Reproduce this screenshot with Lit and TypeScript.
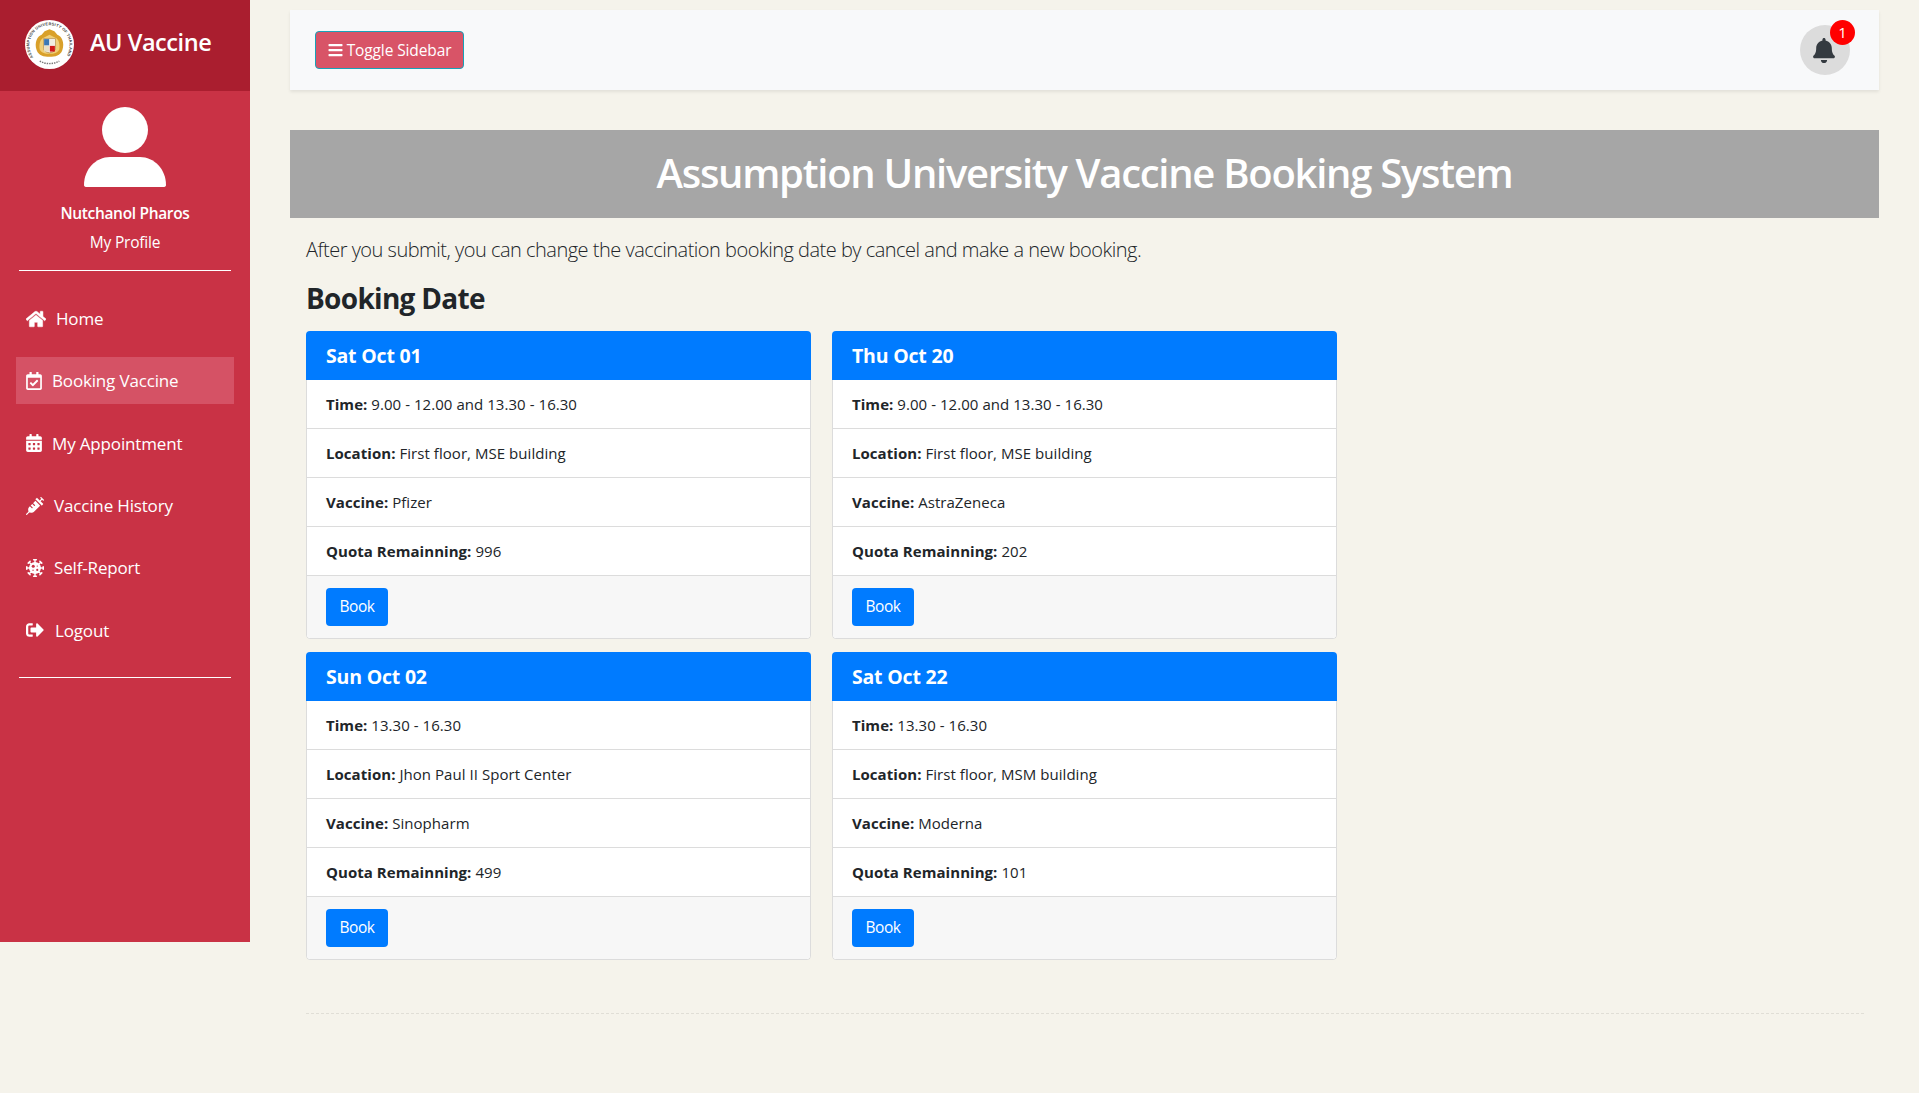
import { LitElement, html, css, svg } from "lit";
import { customElement } from "lit/decorators.js";

const ic = (vb: string, d: string, cls = "ic") =>
  html`<svg class=${cls} viewBox=${vb} fill="currentColor" aria-hidden="true"><path d=${d}></path></svg>`;

const HOME = "M280.37 148.26L96 300.11V464a16 16 0 0 0 16 16l112.06-.29a16 16 0 0 0 15.92-16V368a16 16 0 0 1 16-16h64a16 16 0 0 1 16 16v95.64a16 16 0 0 0 16 16.05L464 480a16 16 0 0 0 16-16V300L295.67 148.26a12.19 12.19 0 0 0-15.3 0zM571.6 251.47L488 182.56V44.05a12 12 0 0 0-12-12h-56a12 12 0 0 0-12 12v72.61L318.47 43a48 48 0 0 0-61 0L4.34 251.47a12 12 0 0 0-1.6 16.9l25.5 31A12 12 0 0 0 45.15 301l235.22-193.74a12.19 12.19 0 0 1 15.3 0L530.9 301a12 12 0 0 0 16.9-1.6l25.5-31a12 12 0 0 0-1.7-16.93z";
const CALCHECK = "M400 64h-48V12c0-6.627-5.373-12-12-12h-40c-6.627 0-12 5.373-12 12v52H160V12c0-6.627-5.373-12-12-12h-40c-6.627 0-12 5.373-12 12v52H48C21.49 64 0 85.49 0 112v352c0 26.51 21.49 48 48 48h352c26.51 0 48-21.49 48-48V112c0-26.51-21.49-48-48-48zm-6 400H54a6 6 0 0 1-6-6V160h352v298a6 6 0 0 1-6 6zm-52.849-200.65L198.842 404.519c-4.705 4.667-12.303 4.637-16.971-.068l-75.091-75.699c-4.667-4.705-4.637-12.303.068-16.971l22.719-22.536c4.705-4.667 12.303-4.637 16.97.069l44.104 44.461 111.072-110.181c4.705-4.667 12.303-4.637 16.971.068l22.536 22.718c4.667 4.705 4.636 12.303-.069 16.97z";
const CALALT = "M0 464c0 26.5 21.5 48 48 48h352c26.5 0 48-21.5 48-48V192H0v272zm320-196c0-6.6 5.4-12 12-12h40c6.6 0 12 5.4 12 12v40c0 6.6-5.4 12-12 12h-40c-6.6 0-12-5.4-12-12v-40zm0 128c0-6.6 5.4-12 12-12h40c6.6 0 12 5.4 12 12v40c0 6.6-5.4 12-12 12h-40c-6.6 0-12-5.4-12-12v-40zM192 268c0-6.6 5.4-12 12-12h40c6.6 0 12 5.4 12 12v40c0 6.6-5.4 12-12 12h-40c-6.6 0-12-5.4-12-12v-40zm0 128c0-6.6 5.4-12 12-12h40c6.6 0 12 5.4 12 12v40c0 6.6-5.4 12-12 12h-40c-6.6 0-12-5.4-12-12v-40zM64 268c0-6.6 5.4-12 12-12h40c6.6 0 12 5.4 12 12v40c0 6.6-5.4 12-12 12H76c-6.6 0-12-5.4-12-12v-40zm0 128c0-6.6 5.4-12 12-12h40c6.6 0 12 5.4 12 12v40c0 6.6-5.4 12-12 12H76c-6.6 0-12-5.4-12-12v-40zM400 64h-48V16c0-8.8-7.2-16-16-16h-32c-8.8 0-16 7.2-16 16v48H160V16c0-8.8-7.2-16-16-16h-32c-8.8 0-16 7.2-16 16v48H48C21.5 64 0 85.5 0 112v48h448v-48c0-26.5-21.5-48-48-48z";
const SYRINGE = "M201.5 174.8l55.7 55.8c3.1 3.1 3.1 8.2 0 11.3l-11.3 11.3c-3.1 3.1-8.2 3.1-11.3 0l-55.7-55.8-45.3 45.3 55.8 55.8c3.1 3.1 3.1 8.2 0 11.3l-11.3 11.3c-3.1 3.1-8.2 3.1-11.3 0L111 265.2l-26.4 26.4c-17.3 17.3-25.6 41.1-23 65.4l7.1 63.6L2.3 487c-3.1 3.1-3.1 8.2 0 11.3l11.3 11.3c3.1 3.1 8.2 3.1 11.3 0l66.3-66.3 63.6 7.1c23.9 2.6 47.9-5.4 65.4-23l181.9-181.9-135.7-135.7-64.9 65zm308.2-93.3L430.5 2.3c-3.1-3.1-8.2-3.1-11.3 0l-11.3 11.3c-3.1 3.1-3.1 8.2 0 11.3l28.3 28.3-45.3 45.3-56.6-56.6-17-17c-3.1-3.1-8.2-3.1-11.3 0l-33.9 33.9c-3.1 3.1-3.1 8.2 0 11.3l17 17L424.8 223l17 17c3.1 3.1 8.2 3.1 11.3 0l33.9-34c3.1-3.1 3.1-8.2 0-11.3l-73.5-73.5 45.3-45.3 28.3 28.3c3.1 3.1 8.2 3.1 11.3 0l11.3-11.3c3.1-3.2 3.1-8.2 0-11.4z";
const SIGNOUT = "M497 273L329 441c-15 15-41 4.5-41-17v-96H152c-13.3 0-24-10.7-24-24v-96c0-13.3 10.7-24 24-24h136V88c0-21.4 25.9-32 41-17l168 168c9.3 9.4 9.3 24.6 0 34zM192 436v-40c0-6.6-5.4-12-12-12H96c-17.7 0-32-14.3-32-32V160c0-17.7 14.3-32 32-32h84c6.6 0 12-5.4 12-12V76c0-6.6-5.4-12-12-12H96c-53 0-96 43-96 96v192c0 53 43 96 96 96h84c6.6 0 12-5.4 12-12z";
const BARS = "M16 132h416c8.837 0 16-7.163 16-16V76c0-8.837-7.163-16-16-16H16C7.163 60 0 67.163 0 76v40c0 8.837 7.163 16 16 16zm0 160h416c8.837 0 16-7.163 16-16v-40c0-8.837-7.163-16-16-16H16c-8.837 0-16 7.163-16 16v40c0 8.837 7.163 16 16 16zm0 160h416c8.837 0 16-7.163 16-16v-40c0-8.837-7.163-16-16-16H16c-8.837 0-16 7.163-16 16v40c0 8.837 7.163 16 16 16z";
const BELL = "M224 512c35.32 0 63.97-28.65 63.97-64H160.03c0 35.35 28.65 64 63.97 64zm215.39-149.71c-19.32-20.76-55.47-51.99-55.47-154.29 0-77.7-54.48-139.9-127.94-155.16V32c0-17.67-14.32-32-31.98-32s-31.98 14.33-31.98 32v20.84C118.56 68.1 64.08 130.3 64.08 208c0 102.3-36.15 133.53-55.47 154.29-6 6.45-8.66 14.16-8.61 21.71.11 16.4 12.98 32 32.1 32h383.8c19.12 0 32-15.6 32.1-32 .05-7.55-2.61-15.27-8.61-21.71z";

const virus = html`<svg class="ic w18" viewBox="0 0 512 512" aria-hidden="true">
  ${[0, 45, 90, 135, 180, 225, 270, 315].map(
    (a) => svg`<g transform="rotate(${a} 256 256)" fill="currentColor"><rect x="236" y="20" width="40" height="110"></rect><rect x="196" y="0" width="120" height="44" rx="22"></rect></g>`
  )}
  <circle cx="256" cy="256" r="170" fill="currentColor"></circle>
  <circle cx="206" cy="206" r="44" fill="#c93245"></circle>
  <circle cx="320" cy="310" r="30" fill="#c93245"></circle>
  <circle cx="320" cy="200" r="18" fill="#c93245"></circle>
  <circle cx="200" cy="320" r="18" fill="#c93245"></circle>
</svg>`;

const logo = html`<svg class="logo" viewBox="0 0 100 100" aria-hidden="true">
  <circle cx="50" cy="50" r="50" fill="#fff"></circle>
  <defs><path id="ring" d="M17 76 A41 41 0 1 1 83 76"></path></defs>
  <text font-size="8" font-family="'Liberation Sans',sans-serif" font-weight="700" fill="#444" textLength="176"><textPath href="#ring">ASSUMPTION UNIVERSITY OF THAILAND</textPath></text>
  <path d="M30 84 Q50 94 70 84" fill="none" stroke="#777" stroke-width="3" stroke-dasharray="3 2"></path>
  <path d="M24 62 C18 46 26 32 34 30 L40 23 L50 19 L60 23 L66 30 C74 32 82 46 76 62 C72 72 62 75 50 75 C38 75 28 72 24 62z" fill="#d9a02a"></path>
  <path d="M30 60 C28 48 32 38 38 36 L50 30 L62 36 C68 38 72 48 70 60 C66 67 58 69 50 69 C42 69 34 67 30 60z" fill="#f0cf78"></path>
  <path d="M38 38 H62 V58 Q62 65 50 67 Q38 65 38 58z" fill="#fff" stroke="#8a5a12" stroke-width="1"></path>
  <rect x="39" y="39" width="10.5" height="13" fill="#3b78b5"></rect>
  <rect x="50.5" y="52.5" width="10.5" height="12" fill="#d01818"></rect>
  <rect x="50.5" y="39" width="10.5" height="13" fill="#f1ece0"></rect>
  <rect x="39" y="52.5" width="10.5" height="12" fill="#e8dfc4"></rect>
</svg>`;

const CARDS = [
  { d: "Sat Oct 01", t: "9.00 - 12.00 and 13.30 - 16.30", l: "First floor, MSE building", v: "Pfizer", q: "996" },
  { d: "Thu Oct 20", t: "9.00 - 12.00 and 13.30 - 16.30", l: "First floor, MSE building", v: "AstraZeneca", q: "202" },
  { d: "Sun Oct 02", t: "13.30 - 16.30", l: "Jhon Paul II Sport Center", v: "Sinopharm", q: "499" },
  { d: "Sat Oct 22", t: "13.30 - 16.30", l: "First floor, MSM building", v: "Moderna", q: "101" },
];

@customElement("app-root")
export class AppRoot extends LitElement {
  static styles = css`
    :host {
      display: flex;
      align-items: flex-start;
      min-height: 1093px;
      background: #f5f3eb;
      font-family: "Open Sans", "Noto Sans", sans-serif;
      color: #212529;
      font-size: 16px;
      line-height: 1.5;
      overflow: hidden;
    }
    * { box-sizing: border-box; }
    .sidebar { width: 250px; height: 942px; flex: none; background: #c93245; color: #fff; }
    .brand { height: 91px; background: #aa1e2f; display: flex; align-items: center; padding-left: 25px; gap: 16px; }
    .logo { width: 49px; height: 49px; display: block; margin-top: -3px; }
    .brand-name { font-size: 23.5px; font-weight: 600; letter-spacing: -0.45px; position: relative; top: -3px; }
    .profile { display: flex; flex-direction: column; align-items: center; padding-top: 16px; }
    .avatar { width: 82px; height: 81px; display: block; }
    .name { font-size: 15.5px; font-weight: 600; margin-top: 13px; line-height: 24px; letter-spacing: -0.33px; }
    .sub { font-size: 15.5px; margin-top: 5px; line-height: 24px; letter-spacing: -0.22px; }
    .rule { height: 1px; background: #fff; margin: 0 19px; }
    .rule.a { margin-top: 16px; }
    .nav { display: flex; flex-direction: column; gap: 15.4px; padding: 24px 16px 0; }
    .item { height: 47px; display: flex; align-items: center; padding-left: 10px; font-size: 17px; letter-spacing: -0.16px; color: #fff; }
    .item.on { background: #d55265; }
    .ic { height: 18px; width: 16px; flex: none; display: block; }
    .thick { stroke: currentColor; stroke-width: 14; }
    .w20 { width: 20px; }
    .w18 { width: 18px; }
    .g10 { margin-right: 10px; }
    .g8 { margin-right: 10px; }
    .g11 { margin-right: 11px; }
    .rule.b { margin-top: 23px; }
    main { flex: 1; min-width: 0; padding: 10px 40px 0; }
    .top {
      height: 80px; background: #f8f9fa; box-shadow: 0 2px 3px rgba(0, 0, 0, 0.08);
      display: flex; align-items: center; justify-content: space-between; padding: 0 29px 0 25px;
    }
    .toggle {
      width: 149px; height: 38px; display: flex; align-items: center; justify-content: center; gap: 4px;
      background: #d85467; border: 1px solid #17a2b8; border-radius: 4px; color: #fff;
      font: inherit; font-size: 15.5px; letter-spacing: -0.12px; padding: 2px 0 0;
    }
    .toggle .ic { width: 15px; height: 16px; margin-top: -2px; }
    .bell { width: 50px; height: 50px; border-radius: 50%; background: #dcdcdc; position: relative; display: flex; align-items: center; justify-content: center; color: #343a40; padding-right: 2px; }
    .bell .ic { width: 22px; height: 25px; }
    .badge { position: absolute; top: -5px; right: -5px; width: 25px; height: 25px; border-radius: 50%; background: #f00; color: #fff; font-size: 15px; display: flex; align-items: center; justify-content: center; }
    .banner {
      margin-top: 40px; height: 88px; background: #a6a6a6; color: #fff; display: flex; align-items: center; justify-content: center;
      font-size: 40px; font-weight: 600; letter-spacing: -1.28px; padding-bottom: 3px;
    }
    .wrap { padding: 0 15px 0 16px; }
    .lead { margin: 17px 0 0; font-size: 20px; font-weight: 300; line-height: 30px; letter-spacing: -0.5px; }
    h3 { margin: 13px 0 0; font-size: 28px; font-weight: 700; line-height: 40px; letter-spacing: -0.7px; }
    .grid { display: grid; grid-template-columns: 505px 505px; column-gap: 21px; row-gap: 13px; margin-top: 13px; }
    .card { height: 308px; border-radius: 4px; display: flex; flex-direction: column; overflow: hidden; }
    .head { height: 49px; flex: none; background: #007bff; color: #fff; font-size: 19.5px; font-weight: 700; display: flex; align-items: center; padding-left: 20px; letter-spacing: -0.2px; }
    .body { flex: 1; display: flex; flex-direction: column; background: #fff; border: 1px solid #dcdcdc; border-top: 0; border-radius: 0 0 4px 4px; }
    .row { height: 49px; flex: none; border-bottom: 1px solid #dcdcdc; padding: 0 19px; display: flex; align-items: center; font-size: 15px; letter-spacing: 0.05px; }
    .row span { white-space: pre; }
    .row b { font-weight: 700; }
    .foot { flex: 1; background: #f7f7f7; padding: 0 19px; display: flex; align-items: center; border-radius: 0 0 4px 4px; }
    .book { width: 62px; height: 38px; background: #007bff; color: #fff; border: 0; border-radius: 4px; font: inherit; font-size: 15.5px; letter-spacing: -0.4px; padding: 0; }
    .dash { margin-top: 52.5px; border-top: 1px dashed #e0ded6; height: 0; }
  `;

  render() {
    return html`
      <aside class="sidebar">
        <div class="brand">${logo}<span class="brand-name">AU Vaccine</span></div>
        <div class="profile">
          <svg class="avatar" viewBox="0 0 82 81" fill="#fff" aria-hidden="true">
            <circle cx="41" cy="23" r="23"></circle>
            <path d="M0 78 C0 62 12 50 26 50 H56 C70 50 82 62 82 78 Q82 80 79 80 H3 Q0 80 0 78z"></path>
          </svg>
          <div class="name">Nutchanol Pharos</div>
          <div class="sub">My Profile</div>
        </div>
        <div class="rule a"></div>
        <nav class="nav">
          <div class="item">${ic("0 0 576 512", HOME, "ic w20 g10 thick")}Home</div>
          <div class="item on">${ic("0 0 448 512", CALCHECK, "ic g8")}Booking Vaccine</div>
          <div class="item">${ic("0 0 448 512", CALALT, "ic g8")}My Appointment</div>
          <div class="item">${ic("0 0 512 512", SYRINGE, "ic w18 g10")}Vaccine History</div>
          <div class="item"><span class="g10">${virus}</span>Self-Report</div>
          <div class="item">${ic("0 0 512 512", SIGNOUT, "ic w18 g11")}Logout</div>
        </nav>
        <div class="rule b"></div>
      </aside>
      <main>
        <header class="top">
          <button class="toggle">${ic("0 0 448 512", BARS)}Toggle Sidebar</button>
          <div class="bell">${ic("0 0 448 512", BELL)}<span class="badge">1</span></div>
        </header>
        <div class="banner">Assumption University Vaccine Booking System</div>
        <div class="wrap">
          <p class="lead">After you submit, you can change the vaccination booking date by cancel and make a new booking.</p>
          <h3>Booking Date</h3>
          <div class="grid">
            ${CARDS.map(
              (c) => html`<section class="card">
                <div class="head">${c.d}</div>
                <div class="body">
                  <div class="row"><span><b>Time:</b> ${c.t}</span></div>
                  <div class="row"><span><b>Location:</b> ${c.l}</span></div>
                  <div class="row"><span><b>Vaccine:</b> ${c.v}</span></div>
                  <div class="row"><span><b>Quota Remainning:</b> ${c.q}</span></div>
                  <div class="foot"><button class="book">Book</button></div>
                </div>
              </section>`
            )}
          </div>
          <div class="dash"></div>
        </div>
      </main>
    `;
  }
}
